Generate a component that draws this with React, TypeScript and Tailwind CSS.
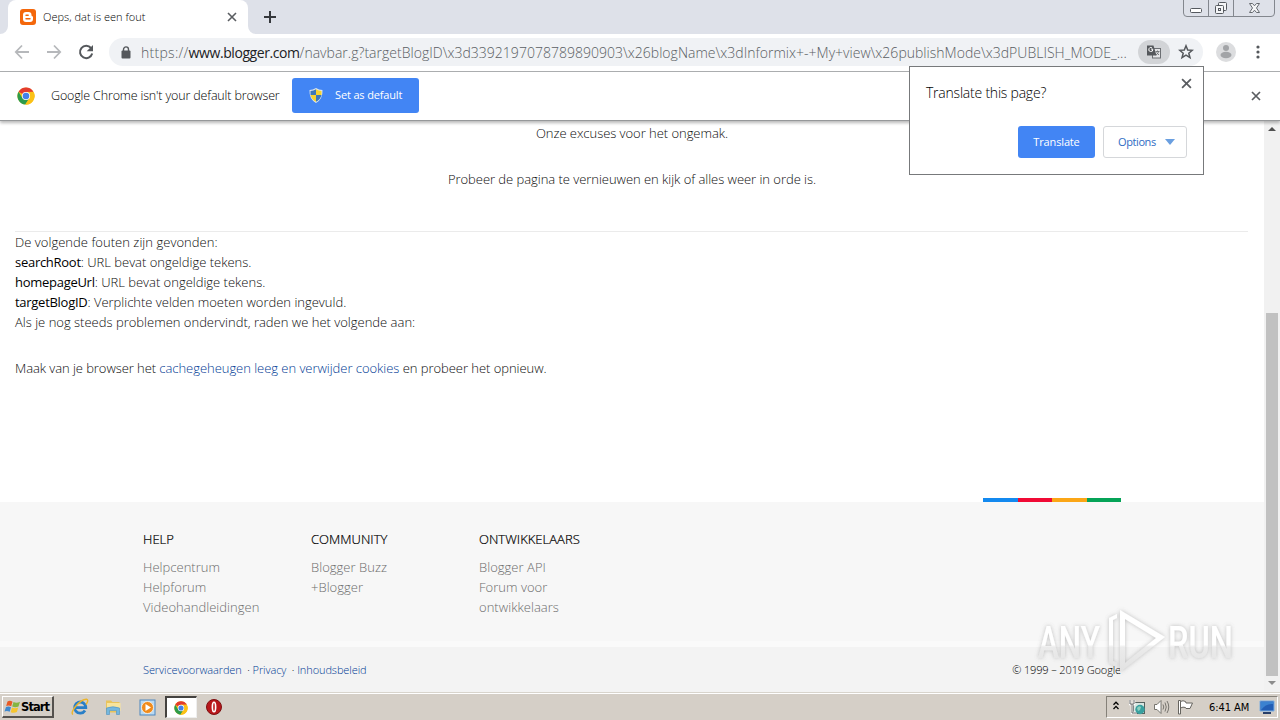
// Desktop view: Chrome window with the Blogger error page, translate popup and the taskbar.

import type { ReactNode } from 'react';

const ERRORS = [
  { field: 'searchRoot', message: 'URL bevat ongeldige tekens.' },
  { field: 'homepageUrl', message: 'URL bevat ongeldige tekens.' },
  { field: 'targetBlogID', message: 'Verplichte velden moeten worden ingevuld.' },
];

const FOOTER_COLUMNS = [
  { title: 'HELP', links: ['Helpcentrum', 'Helpforum', 'Videohandleidingen'] },
  { title: 'COMMUNITY', links: ['Blogger Buzz', '+Blogger'] },
  { title: 'ONTWIKKELAARS', links: ['Blogger API', 'Forum voor ontwikkelaars'] },
];

function ChromeLogo({ size }: { size: number }) {
  return (
    <svg width={size} height={size} viewBox="0 0 18 18" className="shrink-0">
      <circle cx="9" cy="9" r="8.6" fill="#fbc116" />
      <path d="M9 9 L1.55 4.7 A8.6 8.6 0 0 1 16.45 4.7 L9 4.9Z" fill="#e33b2e" />
      <path d="M1.55 4.7 A8.6 8.6 0 0 0 8.3 17.57 L12.5 11 L9 9 L5.4 11Z" fill="#2d9b4b" />
      <path d="M9 4.9 H16.55 A8.6 8.6 0 0 1 8.3 17.6 L12.55 11.05Z" fill="#fbc116" />
      <circle cx="9" cy="9" r="4.1" fill="#fff" />
      <circle cx="9" cy="9" r="3.3" fill="#4381e8" />
    </svg>
  );
}

function CloseIcon({ size, width = 1.8 }: { size: number; width?: number }) {
  return (
    <svg width={size} height={size} viewBox="0 0 10 10" className="shrink-0" fill="none" stroke="#5a5d61" strokeWidth={width}>
      <path d="M1 1 L9 9 M9 1 L1 9" />
    </svg>
  );
}

function WindowButtons() {
  return (
    <svg width="94" height="18" viewBox="0 0 94 18" fill="none" className="shrink-0">
      <path d="M.5 0 V13 Q.5 16.500 4 16.500 H88 Q91.500 16.500 91.500 13 V0" stroke="#83878e" />
      <path d="M25.500 0 V16 M50.500 0 V16" stroke="#83878e" />
      <rect x="7.500" y="8.500" width="11" height="4" rx="1" stroke="#55595f" fill="#fff" />
      <rect x="35.500" y="2.500" width="8" height="8" rx="1" stroke="#55595f" fill="#f4f5f7" />
      <rect x="32.500" y="5.500" width="8" height="8" rx="1" stroke="#55595f" fill="#f4f5f7" />
      <rect x="35.500" y="8.500" width="2" height="2" stroke="#55595f" />
      <path d="M66.500 3.500 H69.500 L71.500 5.800 L73.500 3.500 H76.500 L73.500 8 L76.500 12.500 H73.500 L71.500 10.200 L69.500 12.500 H66.500 L69.500 8Z" stroke="#666a70" fill="#f4f5f7" />
    </svg>
  );
}

function TabStrip() {
  return (
    <div className="flex h-[34px] bg-[#dee1e9]">
      <div className="relative ml-2 flex w-[240px] items-center rounded-t-lg bg-white pl-3 pr-[11px]">
        <svg width="16" height="16" viewBox="0 0 16 16" className="shrink-0">
          <rect width="16" height="16" rx="3" fill="#f4670b" />
          <path d="M6 3 H8.500 A3 3 0 0 1 11.500 6 Q11.500 7.200 12.300 7.200 Q13 7.200 13 8 V10 A3 3 0 0 1 10 13 H6 A3 3 0 0 1 3 10 V6 A3 3 0 0 1 6 3Z" fill="#fff" />
          <path d="M6 6.200 H8.200 M6 9.800 H10" stroke="#f4670b" strokeWidth="1.400" strokeLinecap="round" />
        </svg>
        <span className="ml-[7px] flex-1 whitespace-nowrap text-[11px] tracking-[0.020px] text-black">Oeps, dat is een fout</span>
        <CloseIcon size={10} width={1.6} />
        <svg width="8" height="8" viewBox="0 0 8 8" className="absolute -left-2 bottom-0">
          <path d="M8 0 V8 H0 A8 8 0 0 0 8 0Z" fill="#fff" />
        </svg>
        <svg width="8" height="8" viewBox="0 0 8 8" className="absolute -right-2 bottom-0">
          <path d="M0 0 V8 H8 A8 8 0 0 1 0 0Z" fill="#fff" />
        </svg>
      </div>
      <svg width="12" height="12" viewBox="0 0 12 12" className="ml-4 mt-[11px]" stroke="#35383c" strokeWidth="2">
        <path d="M6 0 V12 M0 6 H12" />
      </svg>
      <div className="ml-auto mr-[3px]">
        <WindowButtons />
      </div>
    </div>
  );
}

function Toolbar() {
  return (
    <div className="flex h-[38px] items-center border-b border-[#aeb0b2] bg-white pb-[1px]">
      <svg width="16" height="16" viewBox="0 0 16 16" className="ml-[14px]" fill="none" stroke="#b6b8bb" strokeWidth="1.800">
        <path d="M15 8 H2 M8 1.500 L1.800 8 L8 14.500" />
      </svg>
      <svg width="16" height="16" viewBox="0 0 16 16" className="ml-4" fill="none" stroke="#b6b8bb" strokeWidth="1.800">
        <path d="M1 8 H14 M8 1.500 L14.200 8 L8 14.500" />
      </svg>
      <svg width="16" height="16" viewBox="0 0 16 16" className="ml-4" fill="none">
        <path d="M13 4 A6.200 6.200 0 1 0 14.200 9.600" stroke="#55585c" strokeWidth="2" />
        <path d="M15 1 V7.300 H8.700Z" fill="#55585c" />
      </svg>
      <div className="ml-[15px] flex h-7 w-[1094px] items-center rounded-full bg-[#f0f2f5] pl-3 pr-2">
        <svg width="10" height="13" viewBox="0 0 10 13" className="shrink-0">
          <rect x="0.500" y="4.500" width="9" height="8" rx="1" fill="#55585c" />
          <path d="M2.500 5 V3.400 A2.500 2.500 0 0 1 7.500 3.400 V5" fill="none" stroke="#55585c" strokeWidth="1.400" />
        </svg>
        <div className="ml-[10px] w-[997px] whitespace-nowrap text-[14px] text-[#5a5e63]">
          <span className="tracking-[0.280px]">https://</span>
          <span className="font-normal tracking-[-0.420px] text-[#202124]">www.blogger.com</span>
          <span className="tracking-[0.020px]">/navbar.g?targetBlogID\x3d3392197078789890903\x26blogName\x3dInformix+-+My+view\x26publishMode\x3dPUBLISH_MODE_...</span>
        </div>
        <div className="flex h-6 w-8 shrink-0 items-center justify-center rounded-full bg-[#d2d4d7]">
          <svg width="16" height="16" viewBox="0 0 16 16" fill="none">
            <rect x="6.500" y="4.500" width="8" height="9.500" fill="#e4e5e7" stroke="#6c6f73" />
            <path d="M1 1.500 H7.500 L10.500 11.500 H1Z" fill="#55585c" />
            <path d="M7 5.200 H5.200 M6.800 5.300 A2 2 0 1 1 6 3.900" stroke="#fff" />
            <path d="M9.500 7.500 H13.500 M11.500 6.500 V7.500 M12.700 7.500 Q12 10 9.800 11 M10.500 8.500 L13 11" stroke="#6c6f73" strokeWidth=".9" />
          </svg>
        </div>
        <svg width="16" height="16" viewBox="0 0 16 16" className="ml-2 shrink-0" fill="none" stroke="#55585c" strokeWidth="1.500">
          <path d="M8 1.800 L9.700 6 L14.300 6.300 L10.800 9.200 L12 13.700 L8 11.200 L4 13.700 L5.200 9.200 L1.700 6.300 L6.300 6Z" />
        </svg>
      </div>
      <svg width="20" height="20" viewBox="0 0 20 20" className="ml-[13px] shrink-0">
        <circle cx="10" cy="10" r="10" fill="#dcdddf" />
        <circle cx="10" cy="6" r="3" fill="#a2a4a7" />
        <ellipse cx="10" cy="13" rx="5.500" ry="3.300" fill="#a2a4a7" />
      </svg>
      <svg width="4" height="14" viewBox="0 0 4 14" className="ml-[20px] shrink-0" fill="#55585c">
        <circle cx="2" cy="2" r="1.600" />
        <circle cx="2" cy="7" r="1.600" />
        <circle cx="2" cy="12" r="1.600" />
      </svg>
    </div>
  );
}

function Shield() {
  return (
    <svg width="14" height="15" viewBox="0 0 14 15" className="shrink-0">
      <path d="M7 0 Q10 2 13.500 2 Q14 11 7 15 Q0 11 .5 2 Q4 2 7 0Z" fill="#dce6ee" />
      <path d="M7 1.300 V7 H1.500 V3 Q4.500 3 7 1.300Z" fill="#3d78b8" />
      <path d="M7 1.300 Q9.500 3 12.500 3 V7 H7Z" fill="#f5d32f" />
      <path d="M1.500 7 H7 V13.800 Q2.500 11.500 1.500 7Z" fill="#f5d32f" />
      <path d="M12.500 7 H7 V13.800 Q11.500 11.500 12.500 7Z" fill="#3d78b8" />
    </svg>
  );
}

function InfoBar() {
  return (
    <div className="relative z-10 flex h-[49px] items-center border-b border-[#96989a] bg-white pb-[1px] pl-[17px] shadow-[0_2px_3px_rgba(0,0,0,0.28)]">
      <ChromeLogo size={18} />
      <span className="ml-4 mt-[2px] w-[229px] whitespace-nowrap text-[12.500px] tracking-[-0.150px] text-black">Google Chrome isn't your default browser</span>
      <div className="ml-3 flex h-[35px] w-[127px] items-center rounded-[3px] bg-[#4285f4] pl-[17px] text-[11px] text-white">
        <Shield />
        <span className="ml-3 whitespace-nowrap font-normal tracking-[-0.150px]">Set as default</span>
      </div>
      <div className="ml-auto mr-[19px] mt-px">
        <CloseIcon size={10} width={1.7} />
      </div>
    </div>
  );
}

function TranslatePopup() {
  return (
    <div className="absolute left-[909px] top-[66px] z-20 flex h-[109px] w-[295px] flex-col border border-[#77797b] bg-white p-4">
      <div className="flex justify-between">
        <span className="text-[14px] leading-5 tracking-[-0.220px] text-black">Translate this page?</span>
        <div className="-mr-[5px] -mt-[5px]">
          <CloseIcon size={11} width={1.6} />
        </div>
      </div>
      <div className="mt-[23px] flex justify-end gap-2 text-[11px] font-normal">
        <div className="flex h-8 w-[77px] items-center justify-center rounded-[3px] bg-[#4285f4] tracking-[-0.150px] text-white">Translate</div>
        <div className="flex h-8 w-[84px] items-center rounded-[3px] border border-[#d5d7da] pl-[14px] text-[#2f6cc4]">
          <span className="w-[38px] tracking-[-0.400px]">Options</span>
          <svg width="10" height="6" viewBox="0 0 10 6" className="ml-[9px]">
            <path d="M0 0 H10 L5 6Z" fill="#6a9fe0" />
          </svg>
        </div>
      </div>
    </div>
  );
}

function Scrollbar() {
  return (
    <div className="flex w-4 shrink-0 flex-col items-center bg-[#f1f1f1]">
      <svg width="8" height="4" viewBox="0 0 8 4" className="mt-[6px]">
        <path d="M0 4 L4 0 L8 4Z" fill="#505050" />
      </svg>
      <div className="mt-[182px] h-[363px] w-3 bg-[#c1c1c1]" />
      <svg width="8" height="4" viewBox="0 0 8 4" className="mt-[5px]">
        <path d="M0 0 H8 L4 4Z" fill="#8c8c8c" />
      </svg>
    </div>
  );
}

function ErrorPage() {
  return (
    <div className="flex h-[571px]">
      <div className="flex flex-1 flex-col bg-white">
        <div className="h-[381px] px-[15px] text-[13px] leading-5 text-[#0c0c0c]">
          <p className="pt-[2px] text-center tracking-[-0.040px]">Onze excuses voor het ongemak.</p>
          <p className="mt-[26px] text-center tracking-[-0.040px]">Probeer de pagina te vernieuwen en kijk of alles weer in orde is.</p>
          <div className="mt-[42px] mr-[1px] border-t border-[#ebebeb]" />
          <p className="tracking-[0.030px]">De volgende fouten zijn gevonden:</p>
          {ERRORS.map(e => (
            <p key={e.field} className="tracking-[-0.010px]">
              <span className="font-normal tracking-[-0.280px] text-black">{e.field}</span>: {e.message}
            </p>
          ))}
          <p>Als je nog steeds problemen ondervindt, raden we het volgende aan:</p>
          <p className="mt-[26px] tracking-[-0.040px]">
            <span className="tracking-[-0.070px]">Maak van je browser het </span>
            <span className="text-[#003a94]">cachegeheugen leeg en verwijder cookies</span> en probeer het opnieuw.
          </p>
        </div>

        {/* Footer */}
        <div className="relative flex h-[145px] border-b-[6px] border-[#fafafa] bg-[#f7f7f7] pl-[143px] pt-[27px] text-[13px] leading-5">
          {FOOTER_COLUMNS.map(c => (
            <div key={c.title} className="w-[168px] pr-12 tracking-[0.030px] text-[#6c6c6c]">
              <div className="mb-2 text-black [-webkit-text-stroke:0.200px_#000]">{c.title}</div>
              {c.links.map(l => <div key={l}>{l}</div>)}
            </div>
          ))}
          <div className="absolute -top-1 left-[983px] grid h-1 w-[138px] grid-cols-4">
            <div className="bg-[#1389ef]" />
            <div className="bg-[#f00a35]" />
            <div className="bg-[#fba616]" />
            <div className="bg-[#05a357]" />
          </div>
        </div>
        <div className="flex flex-1 items-center justify-between bg-[#f3f3f3] pl-[143px] pr-[143px] pt-[2px] text-[11px] text-black">
          <div className="whitespace-pre tracking-[-0.090px]">
            <span className="text-[#003a94]">Servicevoorwaarden</span>{'  · '}
            <span className="text-[#003a94]">Privacy</span>{'  · '}
            <span className="text-[#003a94]">Inhoudsbeleid</span>
          </div>
          <span className="tracking-[-0.130px]">© 1999 – 2019 Google</span>
        </div>
      </div>
      <Scrollbar />
    </div>
  );
}

function Watermark() {
  return (
    <svg width="210" height="76" viewBox="0 0 210 76" className="absolute left-[1032px] top-[604px] z-30 overflow-visible">
      <defs>
        <linearGradient id="wm" gradientUnits="userSpaceOnUse" x1="0" y1="6" x2="0" y2="68">
          <stop offset="0" stopColor="#fff" />
          <stop offset="0.560" stopColor="#fff" />
          <stop offset="0.600" stopColor="#ebebeb" />
          <stop offset="1" stopColor="#e2e2e2" />
        </linearGradient>
        <filter id="wmShadow" x="-10%" y="-20%" width="120%" height="140%">
          <feDropShadow dx="0" dy="0" stdDeviation="2" floodColor="#777" floodOpacity="0.450" />
        </filter>
      </defs>
      <g filter="url(#wmShadow)" fill="url(#wm)">
        <text x="6" y="54" fontSize="45" fontWeight="500" fontFamily="Roboto" textLength="62" lengthAdjust="spacingAndGlyphs">ANY</text>
        <text x="136" y="54" fontSize="45" fontWeight="500" fontFamily="Roboto" textLength="65" lengthAdjust="spacingAndGlyphs">RUN</text>
        <path d="M88 6 L133 33 L88 68Z M93 15 V59 L124 34Z" fillRule="evenodd" />
        <path d="M77 14 L85 10 V14 L81 16 V57 L85 59 V63 L77 59Z" />
      </g>
    </svg>
  );
}

function TaskItem({ children, active = false }: { children: ReactNode; active?: boolean }) {
  return (
    <div className={active
      ? 'flex h-[22px] w-[32px] items-center justify-center border-l-2 border-t-2 border-[#44423f] border-r border-b border-r-[#eee] border-b-[#eee] bg-white'
      : 'flex h-[22px] w-[32px] items-center justify-center'}
    >
      {children}
    </div>
  );
}

function Taskbar() {
  return (
    <div className="flex h-7 items-center border-t border-[#d8d4cc] bg-[#d5cfc7] pt-[1px] shadow-[inset_0_1px_0_#fff]">
      <div className="ml-[2px] flex h-[22px] w-[52px] items-center border border-b-2 border-r-2 border-b-[#55524e] border-l-white border-r-[#55524e] border-t-white pl-[1px]">
        <svg width="17" height="16" viewBox="0 0 17 16" className="shrink-0">
          <path d="M3.500 2.500 Q6 1 8.500 2.700 L7.200 7.200 Q4.700 5.800 2.200 7Z" fill="#e95a24" />
          <path d="M9.500 3 Q12.500 4.500 16 2.800 L14.500 7.400 Q11.500 9 8.200 7.500Z" fill="#84b541" />
          <path d="M2 8 Q4.500 6.800 7 8.200 L5.700 12.800 Q3.200 11.500 .5 12.500Z" fill="#4089cf" />
          <path d="M8 8.500 Q11 9.800 14.200 8.400 L12.900 13 Q10 14.500 6.700 13.200Z" fill="#f6c52e" />
        </svg>
        <span className="mt-[2px] font-['DejaVu_Sans'] text-[11.500px] font-bold tracking-[-0.900px] text-black">Start</span>
      </div>
      <div className="ml-[10px] flex gap-[1.500px]">
        <TaskItem>
          <svg width="18" height="18" viewBox="0 0 18 18" fill="none">
            <path d="M14 12.500 A5.600 5.600 0 1 1 14.800 9.700 H5" stroke="#297fc7" strokeWidth="2.800" />
            <path d="M2 16.500 Q-.5 15 4.500 8.500 Q11 1 15.500 1.300 Q18.200 2 15 6.500" stroke="#ecb52b" strokeWidth="1.400" />
          </svg>
        </TaskItem>
        <TaskItem>
          <svg width="18" height="18" viewBox="0 0 18 18" className="-ml-[2px]">
            <path d="M2 2.500 H7 L8.500 4 H15.500 V14.500 H2Z" fill="#e9c45c" />
            <path d="M3 5 H16.500 V13 H3Z" fill="#f8e49c" />
            <path d="M2.500 10 Q9 7.500 15.500 10 V16.500 H12.500 V12.500 H5.500 V16.500 H2.500Z" fill="#74b7df" stroke="#4c91c2" strokeWidth=".6" />
          </svg>
        </TaskItem>
        <TaskItem>
          <svg width="17" height="17" viewBox="0 0 17 17">
            <rect x="1" y="1" width="15" height="15" fill="#b9d9f1" stroke="#4e87bf" />
            <circle cx="8.500" cy="8.500" r="6" fill="#f08b1c" stroke="#fff" strokeWidth=".7" />
            <path d="M6.500 5 L12 8.500 L6.500 12Z" fill="#fff" />
          </svg>
        </TaskItem>
        <TaskItem active>
          <ChromeLogo size={14} />
        </TaskItem>
        <TaskItem>
          <svg width="16" height="16" viewBox="0 0 16 16">
            <circle cx="8" cy="8" r="7.500" fill="#b8171b" stroke="#7d1012" />
            <ellipse cx="8" cy="8" rx="1.700" ry="4.800" fill="#c8393c" stroke="#fff" strokeWidth="1.500" />
          </svg>
        </TaskItem>
      </div>

      {/* Tray */}
      <div className="ml-auto mr-[2px] flex h-[22px] w-[172px] items-center border border-b-white border-l-[#858179] border-r-white border-t-[#858179] pl-[6px]">
        <svg width="6" height="9" viewBox="0 0 6 9" fill="none" stroke="#000" strokeWidth="1.300" className="-mt-[4px]">
          <path d="M.5 3.800 L3 1.200 L5.500 3.800 M.5 8 L3 5.400 L5.500 8" />
        </svg>
        <svg width="18" height="17" viewBox="0 0 18 17" className="ml-[10px]">
          <rect x="4.500" y="3.500" width="11" height="11" fill="#d8e6e2" stroke="#55605e" />
          <path d="M1 1 V5 H5 V1 M3 5 V14 H8" fill="none" stroke="#fff" strokeWidth="2.500" />
          <path d="M1 1 V5 H5 V1 M3 5 V14 H8" fill="none" stroke="#666" />
          <circle cx="11" cy="10.500" r="4.700" fill="#38a09f" />
          <path d="M8 9 Q10 6 12 8 L11 11 L9 12Z" fill="#8ed0c0" />
        </svg>
        <svg width="17" height="16" viewBox="0 0 17 16" className="ml-[6px]" fill="none">
          <path d="M1.500 5.500 H4 L8 1.500 V14.500 L4 10.500 H1.500Z" fill="#fff" stroke="#77756f" />
          <path d="M10 5.500 Q11.500 8 10 10.500 M12 3.500 Q14.500 8 12 12.500 M14 2 Q17.500 8 14 14" stroke="#77756f" />
        </svg>
        <svg width="17" height="16" viewBox="0 0 17 16" className="ml-[7px]" fill="#fff" stroke="#66645f">
          <path d="M1.500 1.500 H3.500 V15 H1.500Z" />
          <path d="M3.500 2.500 Q6 1 8.500 2.500 L9 4 H15.500 L13 9.500 H9 L8.500 8.500 Q6 7.500 3.500 9Z" />
        </svg>
        <span className="ml-[15px] mt-[2px] w-[41px] whitespace-nowrap font-['DejaVu_Sans_Condensed','DejaVu_Sans'] text-[11px] tracking-[-0.080px] text-black">6:41 AM</span>
        <svg width="16" height="14" viewBox="0 0 16 14" className="ml-[9px]">
          <path d="M1 1 H15 V11 H1Z" fill="#235eb5" stroke="#7daee1" />
          <path d="M2 10 Q7 3 14 4 V2 H2Z" fill="#3b82d0" />
          <path d="M4 12 H12 V14 H4Z" fill="#273e69" />
        </svg>
      </div>
    </div>
  );
}

export default function App() {
  return (
    <div className="relative h-[720px] w-[1280px] overflow-hidden bg-white font-['Open_Sans',sans-serif] font-light">
      <TabStrip />
      <Toolbar />
      <InfoBar />
      <ErrorPage />
      <Taskbar />
      <TranslatePopup />
      <Watermark />
    </div>
  );
}
